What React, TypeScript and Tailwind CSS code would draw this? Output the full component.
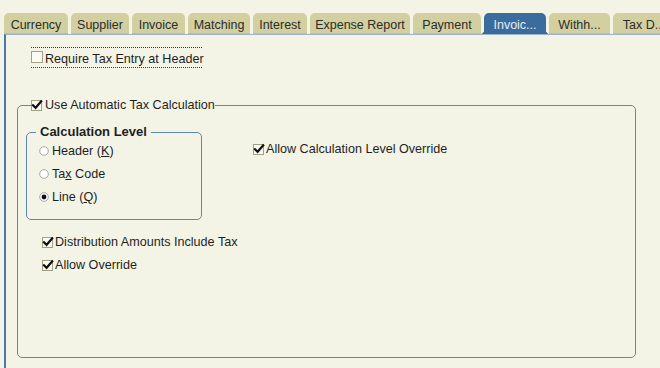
import React from "react";

function Check({ checked, size = 10 }: { checked: boolean; size?: number }) {
  return (
    <svg width={size + 2} height={size + 2} viewBox="0 0 12 12" className="shrink-0 overflow-visible">
      <rect x="0.5" y="1.5" width="10" height="10" fill="#fbfbf3" stroke="#a3a184" strokeWidth="1" />
      {checked && (
        <path d="M2 6.2 L4.6 8.8 L10.2 2.4" fill="none" stroke="#111" strokeWidth="2.2" strokeLinecap="square" />
      )}
    </svg>
  );
}

function Radio({ on }: { on: boolean }) {
  return (
    <svg width="10" height="10" viewBox="0 0 10 10" className="shrink-0">
      <circle cx="5" cy="5" r="4.3" fill="#ffffff" stroke="#a8a8a0" strokeWidth="1" />
      {on && <circle cx="5" cy="5" r="2.4" fill="#111" />}
    </svg>
  );
}

const tabs: { label: string; w: string; active?: boolean }[] = [
  { label: "Currency", w: "w-[64px]" },
  { label: "Supplier", w: "w-[58px]" },
  { label: "Invoice", w: "w-[53px]" },
  { label: "Matching", w: "w-[62px]" },
  { label: "Interest", w: "w-[54px]" },
  { label: "Expense Report", w: "w-[100px]" },
  { label: "Payment", w: "w-[68px]" },
  { label: "Invoic...", w: "w-[62px]", active: true },
  { label: "Withh...", w: "w-[61px]" },
  { label: "Tax D...", w: "w-[62px]" },
];

export default function App() {
  return (
    <div className="w-[660px] h-[368px] overflow-hidden bg-[#f4f4e6] font-['Liberation_Sans',Arial,sans-serif] text-[12.6px] leading-[14px] text-[#1e1e1e]">
      <div className="flex pt-[13px] pl-[4px] gap-[3px] h-[34px] whitespace-nowrap">
        {tabs.map((t) => (
          <div
            key={t.label}
            className={
              "relative h-[21px] shrink-0 rounded-t-[5px] pt-[5px] text-center text-[12.5px] " +
              t.w +
              (t.active
                ? " bg-[#3b6c9e] text-[#e6ecf4]"
                : " bg-[#d2cfa0] text-[#2c2c2c] border-b border-[#b9bfae]")
            }
          >
            {t.label}
            {t.active && (
              <>
                <span className="absolute bottom-0 left-[-3px] w-[3px] h-[3px] bg-[radial-gradient(circle_at_0_0,transparent_2.5px,#3b6c9e_3px)]" />
                <span className="absolute bottom-0 right-[-3px] w-[3px] h-[3px] bg-[radial-gradient(circle_at_100%_0,transparent_2.5px,#3b6c9e_3px)]" />
              </>
            )}
          </div>
        ))}
      </div>
      <div className="ml-[4px] h-[334px] border-l-2 border-t border-l-[#4a78ad] border-t-[#9fb3cc]">
        <div className="mt-[12px] ml-[25px] w-[171px] h-[21px] border-y border-dotted border-[#3a3a3a] flex items-center gap-[2px] whitespace-nowrap">
          <svg width="12" height="13" viewBox="0 0 12 13" className="shrink-0">
            <rect x="0.5" y="0.5" width="11" height="11" fill="#fbfbf3" stroke="#a3a184" strokeWidth="1" />
          </svg>
          <span className="pt-[2px]">Require Tax Entry at Header</span>
        </div>

        <fieldset className="mt-[30px] ml-[11px] w-[619px] h-[260px] border border-[#5f87b6] rounded-[5px]">
          <legend className="ml-[13px] flex items-center gap-[2px] h-[14px]">
            <Check checked />
            <span>Use Automatic Tax Calculation</span>
          </legend>

          <div className="flex items-start mt-[13px]">
            <fieldset className="ml-[8px] w-[176px] h-[95px] border border-[#5f87b6] rounded-[5px] pl-[12px]">
              <legend className="ml-[-3px] px-[4px] font-bold text-[13px] h-[14px]">Calculation Level</legend>
              <div className="flex flex-col gap-[9px] mt-[5px]">
                <div className="flex items-center gap-[3px]">
                  <Radio on={false} />
                  <span>
                    Header (<span className="underline">K</span>)
                  </span>
                </div>
                <div className="flex items-center gap-[3px]">
                  <Radio on={false} />
                  <span>
                    Ta<span className="underline">x</span> Code
                  </span>
                </div>
                <div className="flex items-center gap-[3px]">
                  <Radio on />
                  <span>
                    Line (<span className="underline">Q</span>)
                  </span>
                </div>
              </div>
            </fieldset>
            <div className="ml-[51px] mt-[17px] flex items-center gap-[1px]">
              <Check checked />
              <span>Allow Calculation Level Override</span>
            </div>
          </div>

          <div className="ml-[24px] mt-[15px] flex flex-col gap-[9px]">
            <div className="flex items-center gap-[1px]">
              <Check checked />
              <span>Distribution Amounts Include Tax</span>
            </div>
            <div className="flex items-center gap-[1px]">
              <Check checked />
              <span>Allow Override</span>
            </div>
          </div>
        </fieldset>
      </div>
    </div>
  );
}
